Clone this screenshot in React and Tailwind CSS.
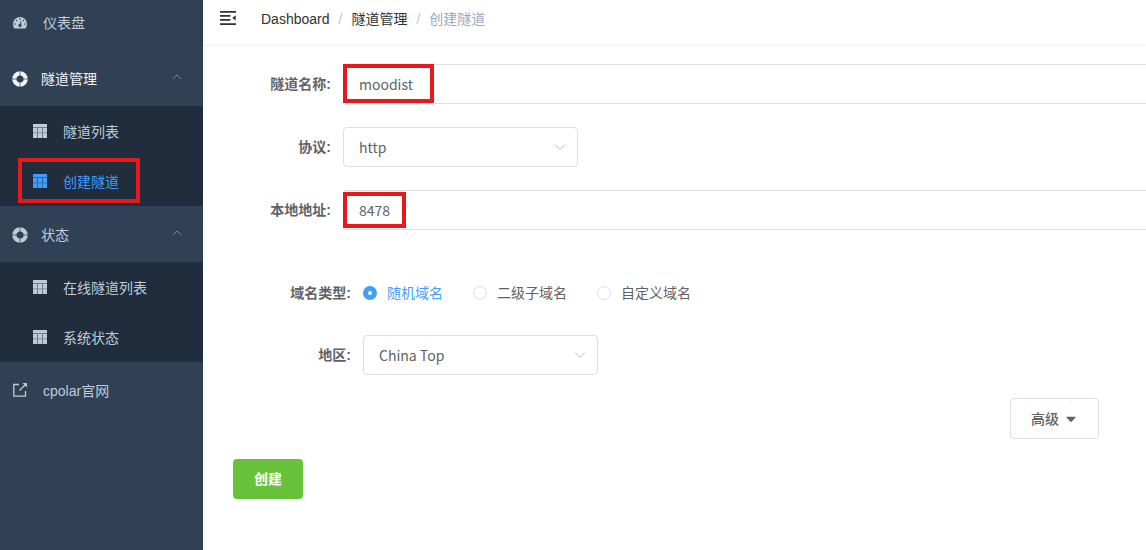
import { useState } from 'react';

const DashboardIcon = () => (
  <svg viewBox="0 0 14 12" className="h-3 w-3.5" fill="currentColor">
    <path
      fillRule="evenodd"
      d="M7 0a7 7 0 0 1 7 7c0 1.500-.4 2.800-1.100 4-.2.300-.5.500-.9.500H2c-.4 0-.7-.2-.9-.5A7.500 7.500 0 0 1 0 7a7 7 0 0 1 7-7zM2 6.200a.8.800 0 1 0 0 1.600.8.800 0 0 0 0-1.600zM3.500 2.700a.8.800 0 1 0 0 1.600.8.800 0 0 0 0-1.600zM7 1.200a.8.800 0 1 0 0 1.600.8.800 0 0 0 0-1.600zM10.500 2.700a.8.800 0 1 0 0 1.600.8.800 0 0 0 0-1.600zM12 6.200a.8.800 0 1 0 0 1.600.8.800 0 0 0 0-1.600zM7.800 3.900 6.900 7a1.500 1.500 0 1 0 1 .300l.8-3.100z"
    />
  </svg>
);

const ComponentIcon = () => (
  <svg viewBox="0 0 16 16" className="size-4" fill="none" stroke="currentColor">
    <circle cx="8" cy="8" r="5.700" strokeWidth="4.200" />
    <path d="M8 0v5M8 11v5M0 8h5M11 8h5" stroke="#304156" strokeWidth="0.700" />
  </svg>
);

const TableIcon = () => (
  <svg viewBox="0 0 14 14" className="size-3.5" fill="currentColor">
    <path d="M0 0h14v3H0zM0 4h4v4.500H0zM5 4h4v4.500H5zM10 4h4v4.500h-4zM0 9.300h4V14H0zM5 9.300h4V14H5zM10 9.300h4V14h-4z" />
    <path d="M0 3h14v11H0z" opacity="0.5" />
  </svg>
);

const LinkIcon = () => (
  <svg viewBox="0 0 14 14" className="size-3.5" fill="none" stroke="currentColor" strokeWidth="1.300">
    <path d="M6 1.500H.8v11.700h11.700V8M6.500 7.500l6-6" />
    <path d="M9.500 0H14v4.500z" fill="currentColor" stroke="none" />
  </svg>
);

const FoldIcon = () => (
  <svg viewBox="0 0 16 14" className="h-3.5 w-4" fill="currentColor">
    <path d="M0 0h16v1.700H0zM0 4h10.500v1.700H0zM0 8h10.500v1.700H0zM0 12.200h16v1.700H0zM15.700 4.200v5.300L12.300 6.900z" />
  </svg>
);

const Chevron = ({ className }) => (
  <svg viewBox="0 0 12 12" className={className} fill="none" stroke="currentColor">
    <path d="M1 3.500l5 5 5-5" />
  </svg>
);

const groups = [
  {
    title: '隧道管理',
    current: true,
    items: [{ name: '隧道列表' }, { name: '创建隧道', active: true }],
  },
  {
    title: '状态',
    items: [{ name: '在线隧道列表' }, { name: '系统状态' }],
  },
];

const domainTypes = ['随机域名', '二级子域名', '自定义域名'];

const Highlight = ({ className }) => (
  <span className={`pointer-events-none absolute border-4 border-[#e8191c] ${className}`} />
);

const Sidebar = () => (
  <aside className="w-[203px] shrink-0 bg-[#304156] text-[#bfcbd9]">
    <nav>
      <a href="#dashboard" className="flex h-[50px] items-center gap-4 pb-1 pl-[13px]">
        <DashboardIcon />
        仪表盘
      </a>
      {groups.map((group) => (
        <div key={group.title}>
          <button
            type="button"
            className={`flex h-14 w-full items-center gap-[13px] pl-3 pr-[21px] pt-0.5 ${group.current ? 'text-[#f4f4f5]' : ''}`}
          >
            <ComponentIcon />
            {group.title}
            <Chevron className="mb-1 ml-auto size-2.5 rotate-180 text-[#909399]" />
          </button>
          <ul className="bg-[#1f2d3d]">
            {group.items.map((item) => (
              <li key={item.name} className="relative">
                <a
                  href="#tunnel"
                  className={`flex h-[50px] items-center gap-4 pl-[33px] ${item.active ? 'text-[#409eff]' : ''}`}
                >
                  <TableIcon />
                  <span className="pt-0.5">{item.name}</span>
                </a>
                {item.active && <Highlight className="left-[18px] top-0.5 h-[45px] w-[122px]" />}
              </li>
            ))}
          </ul>
        </div>
      ))}
      <a href="#cpolar" className="flex h-14 items-center gap-4 pl-[13px]">
        <LinkIcon />
        <span className="pt-0.5">cpolar官网</span>
      </a>
    </nav>
  </aside>
);

const Select = ({ id, value }) => (
  <div className="relative w-[235px]">
    <select
      id={id}
      defaultValue={value}
      className="h-10 w-full appearance-none rounded border border-[#dcdfe6] bg-white px-[15px] font-['Noto_Sans_CJK_SC',sans-serif]"
    >
      <option>{value}</option>
    </select>
    <Chevron className="pointer-events-none absolute right-3 top-3.5 size-3 text-[#b4b8c0]" />
  </div>
);

const TextField = ({ id, value, highlight }) => (
  <div className="relative flex-1">
    <input
      id={id}
      type="text"
      defaultValue={value}
      className="h-10 w-full rounded-l border border-r-0 border-[#dcdfe6] px-[15px] font-['Noto_Sans_CJK_SC',sans-serif] outline-none"
    />
    <Highlight className={highlight} />
  </div>
);

const Field = ({ label, htmlFor, nested, children }) => (
  <div className="flex">
    <label
      htmlFor={htmlFor}
      className={`h-10 shrink-0 pr-3 text-right font-bold leading-10 ${nested ? 'w-[130px]' : 'w-[110px]'}`}
    >
      {label}:
    </label>
    {children}
  </div>
);

const App = () => {
  const [domainType, setDomainType] = useState(domainTypes[0]);

  return (
    <div className="flex min-h-screen bg-white font-['Liberation_Sans','Noto_Sans_CJK_SC',sans-serif] text-sm text-[#606266]">
      <Sidebar />
      <div className="min-w-0 flex-1">
        <header className="flex h-11 items-center pb-2 pl-[17px] text-[#303133] shadow-[0_1px_4px_rgba(0,21,41,0.08)]">
          <button type="button" aria-label="Toggle menu">
            <FoldIcon />
          </button>
          <nav className="flex pl-[25px] pt-0.5">
            <a href="#dashboard">Dashboard</a>
            <span className="mx-[9px] text-[#c0c4cc]">/</span>
            <a href="#tunnel">隧道管理</a>
            <span className="mx-[9px] text-[#c0c4cc]">/</span>
            <span className="text-[#97a8be]">创建隧道</span>
          </nav>
        </header>

        <form className="pl-[30px] pt-5" onSubmit={(e) => e.preventDefault()}>
          <div className="flex flex-col gap-[23px]">
            <Field label="隧道名称" htmlFor="name">
              <TextField id="name" value="moodist" highlight="left-0 top-0 h-[39px] w-[91px]" />
            </Field>
            <Field label="协议" htmlFor="protocol">
              <Select id="protocol" value="http" />
            </Field>
            <Field label="本地地址" htmlFor="address">
              <TextField id="address" value="8478" highlight="left-0 top-0.5 h-9 w-[63px]" />
            </Field>
          </div>

          <div className="mt-[43px] flex flex-col gap-[22px]">
            <Field label="域名类型" htmlFor="domain-0" nested>
              <div className="flex items-center gap-[30px]">
                {domainTypes.map((type, i) => (
                  <label
                    key={type}
                    className={`flex items-center gap-2.5 ${domainType === type ? 'text-[#409eff]' : ''}`}
                  >
                    <input
                      id={`domain-${i}`}
                      type="radio"
                      name="domainType"
                      checked={domainType === type}
                      onChange={() => setDomainType(type)}
                      className="size-3.5 appearance-none rounded-full border border-[#dcdfe6] bg-white checked:border-[5px] checked:border-[#409eff]"
                    />
                    {type}
                  </label>
                ))}
              </div>
            </Field>
            <Field label="地区" htmlFor="region" nested>
              <Select id="region" value="China Top" />
            </Field>
          </div>

          <div className="mt-[23px] flex justify-end pr-[47px]">
            <button
              type="button"
              className="flex h-[41px] items-center gap-[5px] rounded border border-[#dcdfe6] px-5 font-medium"
            >
              高级
              <svg viewBox="0 0 14 14" className="size-3.5" fill="currentColor">
                <path d="M2.800 4.800h8.400a.4.400 0 0 1 .3.700L7.500 9.700a.8.800 0 0 1-1 0L2.500 5.500a.4.400 0 0 1 .3-.7z" />
              </svg>
            </button>
          </div>

          <button type="submit" className="mt-5 h-10 rounded bg-[#67c23a] px-[21px] font-bold text-white">
            创建
          </button>
        </form>
      </div>
    </div>
  );
};

export default App;
